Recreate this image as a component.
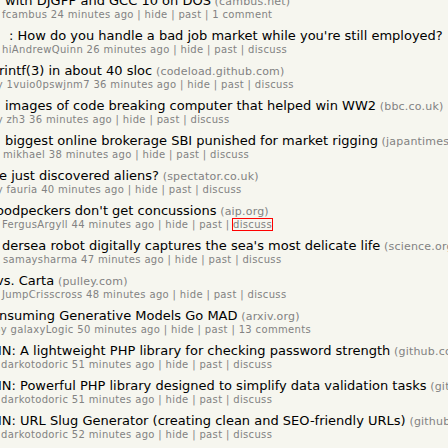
type Story = {
  tx: string;
  title: string;
  site?: string;
  sx: string;
  sub: string;
  tail: string;
  boxed?: boolean;
};

const stories: Story[] = [
  { tx: 'ml-[5px]', title: 'with DJGPP and GCC 10 on DOS', site: 'cambus.net', sx: 'ml-[2px]', sub: 'fcambus 24 minutes ago', tail: '1 comment' },
  { tx: 'ml-[9px]', title: ": How do you handle a bad job market while you're still employed?", sx: 'ml-[2px]', sub: 'hiAndrewQuinn 26 minutes ago', tail: 'discuss' },
  { tx: '-ml-[1px]', title: 'rintf(3) in about 40 sloc', site: 'codeload.github.com', sx: '-ml-[10px]', sub: 'by 1vuio0pswjnm7 36 minutes ago', tail: 'discuss' },
  { tx: 'ml-[5px]', title: 'images of code breaking computer that helped win WW2', site: 'bbc.co.uk', sx: '-ml-[10px]', sub: 'by zh3 36 minutes ago', tail: 'discuss' },
  { tx: 'ml-[5px]', title: 'biggest online brokerage SBI punished for market rigging', site: 'japantimes.co.jp', sx: 'ml-[3px]', sub: 'mikhael 38 minutes ago', tail: 'discuss' },
  { tx: '-ml-[1px]', title: 'e just discovered aliens?', site: 'spectator.co.uk', sx: '-ml-[10px]', sub: 'by fauria 40 minutes ago', tail: 'discuss' },
  { tx: '-ml-[4px]', title: "oodpeckers don't get concussions", site: 'aip.org', sx: 'ml-[2px]', sub: 'FergusArgyll 44 minutes ago', tail: 'discuss', boxed: true },
  { tx: 'ml-[2px]', title: "dersea robot digitally captures the sea's most delicate life", site: 'science.org', sx: 'ml-[3px]', sub: 'samaysharma 47 minutes ago', tail: 'discuss' },
  { tx: '-ml-[4px]', title: 'vs. Carta', site: 'pulley.com', sx: 'ml-[2px]', sub: 'JumpCrisscross 48 minutes ago', tail: 'discuss' },
  { tx: '-ml-[1px]', title: 'nsuming Generative Models Go MAD', site: 'arxiv.org', sx: '-ml-[6px]', sub: 'by galaxyLogic 50 minutes ago', tail: '13 comments' },
  { tx: '-ml-[8px]', title: 'HN: A lightweight PHP library for checking password strength', site: 'github.com', sx: 'ml-[1px]', sub: 'darkotodoric 51 minutes ago', tail: 'discuss' },
  { tx: '-ml-[8px]', title: 'HN: Powerful PHP library designed to simplify data validation tasks', site: 'github.com', sx: 'ml-[1px]', sub: 'darkotodoric 51 minutes ago', tail: 'discuss' },
  { tx: '-ml-[8px]', title: 'HN: URL Slug Generator (creating clean and SEO-friendly URLs)', site: 'github.com', sx: 'ml-[1px]', sub: 'darkotodoric 52 minutes ago', tail: 'discuss' },
];

const StoryRow = ({ s }: { s: Story }) => (
  <div className="h-[35px]">
    <div className={`h-[17px] leading-[17px] text-[13px] text-black whitespace-nowrap ${s.tx}`}>
      {s.title}
      <span className="text-[11px] tracking-[0.2px] text-[#828282]">{s.site ? ` (${s.site})` : ''}</span>
    </div>
    <div className={`h-[12px] leading-[12px] text-[10px] tracking-[0.35px] text-[#828282] whitespace-nowrap ${s.sx}`}>
      {s.sub} | hide | past |{' '}
      <span className={s.boxed ? 'outline outline-1 outline-[#ff0000]' : ''}>{s.tail}</span>
    </div>
  </div>
);

export default function App() {
  return (
    <div className="w-[448px] h-[448px] overflow-hidden bg-[#f6f6ef] font-['DejaVu_Sans',Verdana,sans-serif]">
      <div className="-mt-[8px]">
        {stories.map((s, i) => (
          <StoryRow key={i} s={s} />
        ))}
      </div>
    </div>
  );
}
